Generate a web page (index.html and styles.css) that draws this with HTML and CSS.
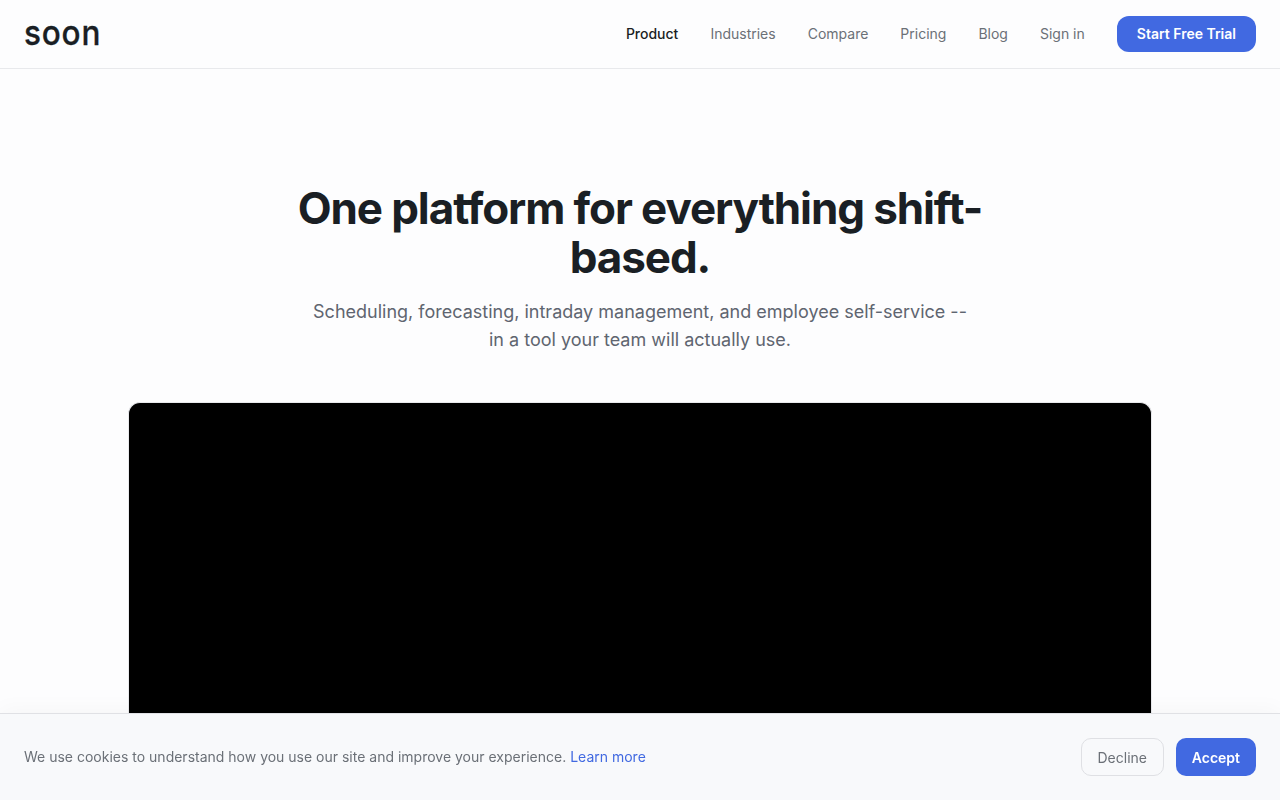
FILE: index.html
```html
<!DOCTYPE html>
<html lang="en">
<head>
<meta charset="utf-8">
<title>Soon</title>
<link rel="stylesheet" href="styles.css">
</head>
<body>
<header class="nav">
  <a class="logo" href="#">soon</a>
  <nav class="links">
    <a class="link active" href="#">Product</a>
    <a class="link" href="#">Industries</a>
    <a class="link" href="#">Compare</a>
    <a class="link" href="#">Pricing</a>
    <a class="link" href="#">Blog</a>
    <a class="link" href="#">Sign in</a>
    <a class="cta" href="#">Start Free Trial</a>
  </nav>
</header>
<main class="hero">
  <h1 class="title">One platform for everything shift-based.</h1>
  <p class="sub">Scheduling, forecasting, intraday management, and employee self-service -- in a tool your team will actually use.</p>
  <div class="video"></div>
</main>
<aside class="cookie">
  <p class="cookie-text">We use cookies to understand how you use our site and improve your experience. <a class="learn" href="#">Learn more</a></p>
  <div class="cookie-actions">
    <button class="btn decline">Decline</button>
    <button class="btn accept">Accept</button>
  </div>
</aside>
</body>
</html>
```
FILE: styles.css
```css
* { box-sizing: border-box; }
html, body { margin: 0; height: 100%; overflow: hidden; }
body { background: #fdfdfe; font-family: Inter, "Liberation Sans", sans-serif; color: #1a1f24; line-height: 20px; }
a { text-decoration: none; }
.nav { height: 69px; display: flex; align-items: center; justify-content: space-between; padding: 0 24px; border-bottom: 1px solid #e8e9ec; }
.logo { font-size: 35px; font-weight: 500; letter-spacing: 0.9px; color: #1a1f24; line-height: 36px; transform: scaleX(.9); transform-origin: left center; margin-top: -5px; -webkit-text-stroke: 0.3px #1a1f24; }
.links { display: flex; align-items: center; gap: 32px; }
.link { font-size: 14px; color: #6b7077; }
.link.active { color: #1a1f24; font-weight: 500; }
.cta { background: #4169e1; color: #fff; font-size: 14px; font-weight: 600; height: 36px; padding: 0 20px; border-radius: 12px; display: flex; align-items: center; }
.hero { display: flex; flex-direction: column; align-items: center; padding-top: 115px; }
.title { margin: 0; width: 720px; text-align: center; font-size: 44px; font-weight: 700; line-height: 49px; letter-spacing: -1.1px; color: #1a1f24; }
.sub { margin: 16px 0 0; width: 672px; text-align: center; font-size: 18px; line-height: 28px; color: #5f6570; }
.video { margin-top: 48px; width: 1024px; height: 397px; flex: none; background: #000; border: 1px solid #e8e9ec; border-bottom: 0; border-radius: 12px 12px 0 0; }
.cookie { position: fixed; left: 0; right: 0; bottom: 0; height: 87px; display: flex; align-items: center; justify-content: space-between; padding: 0 24px; background: #f8f9fb; border-top: 1px solid #e0e1e5; box-shadow: 0 -4px 20px rgba(0,0,0,.03); }
.cookie-text { margin: 0; font-size: 14px; line-height: 20px; color: #6b7077; }
.learn { color: #4169e1; }
.cookie-actions { display: flex; gap: 12px; }
.btn { height: 38px; border-radius: 10px; font-family: inherit; font-size: 14px; padding: 0 16px; }
.decline { width: 83px; padding: 0; background: transparent; border: 1px solid #dfe0e4; color: #6b7077; font-weight: 400; }
.accept { background: #4169e1; border: 0; color: #fff; font-weight: 600; }
```
